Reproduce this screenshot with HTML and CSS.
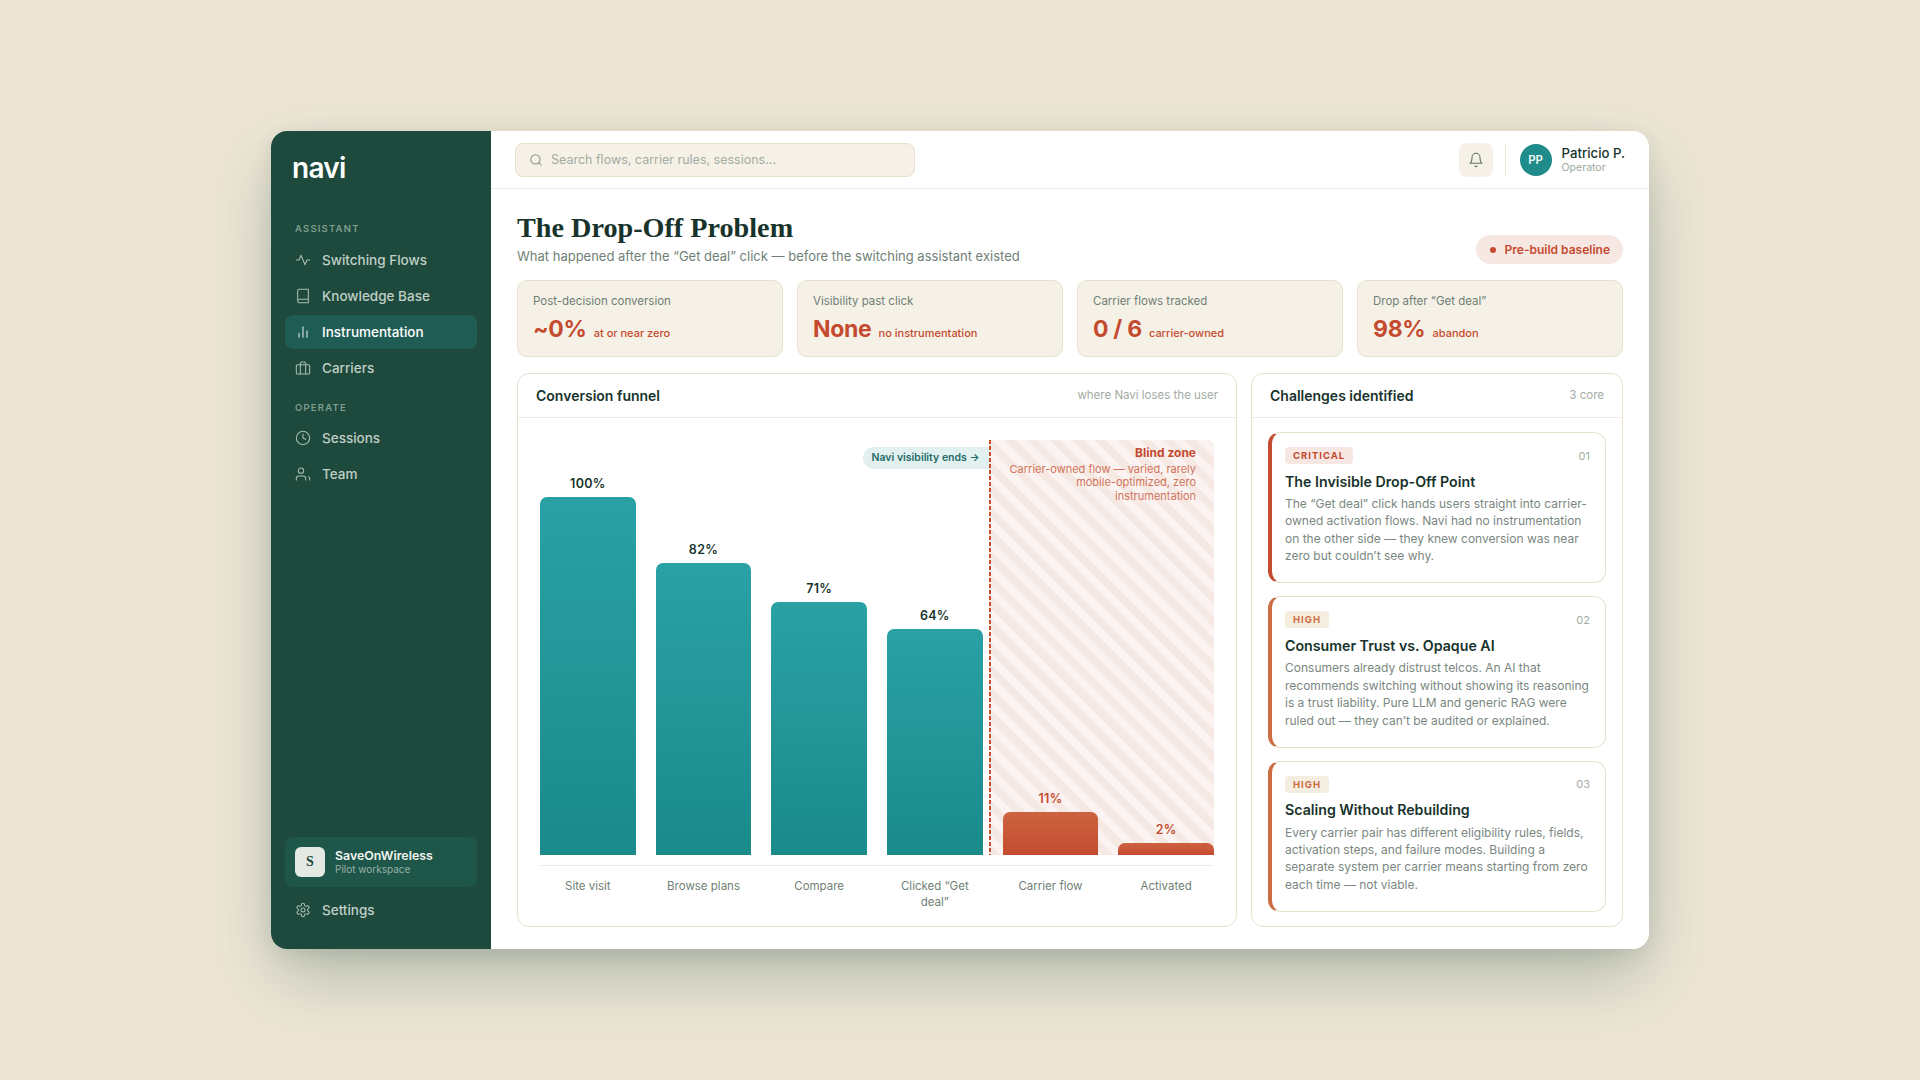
FILE: index.html
```html
<!DOCTYPE html>
<html lang="en">
<head>
    <meta charset="UTF-8">
    <meta name="viewport" content="width=device-width, initial-scale=1.0">
    <title>Navi - The Drop-Off Problem</title>
    <link rel="stylesheet" href="styles.css">
</head>
<body>

    <div class="app">
        <aside class="sidebar">
            <div class="logo">navi</div>

            <div class="nav-label">ASSISTANT</div>
            <nav class="nav">
                <a class="nav-item">
                    <svg class="icon" viewBox="0 0 24 24"><path d="M22 12h-4l-3 7L9 5l-3 7H2"/></svg>
                    Switching Flows
                </a>
                <a class="nav-item">
                    <svg class="icon" viewBox="0 0 24 24"><path d="M4 19.5v-15A2.5 2.5 0 0 1 6.5 2H20v20H6.5a2.5 2.5 0 0 1 0-5H20"/></svg>
                    Knowledge Base
                </a>
                <a class="nav-item active">
                    <svg class="icon" viewBox="0 0 24 24"><path d="M18 20V10M12 20V4M6 20v-6"/></svg>
                    Instrumentation
                </a>
                <a class="nav-item">
                    <svg class="icon" viewBox="0 0 24 24"><rect x="2" y="7" width="20" height="14" rx="2"/><path d="M16 21V5a2 2 0 0 0-2-2h-4a2 2 0 0 0-2 2v16"/></svg>
                    Carriers
                </a>
            </nav>

            <div class="nav-label second">OPERATE</div>
            <nav class="nav">
                <a class="nav-item">
                    <svg class="icon" viewBox="0 0 24 24"><circle cx="12" cy="12" r="10"/><path d="M12 6v6l4 2"/></svg>
                    Sessions
                </a>
                <a class="nav-item">
                    <svg class="icon" viewBox="0 0 24 24"><path d="M16 21v-2a4 4 0 0 0-4-4H6a4 4 0 0 0-4 4v2"/><circle cx="9" cy="7" r="4"/><path d="M22 21v-2a4 4 0 0 0-1.5-3"/></svg>
                    Team
                </a>
            </nav>

            <div class="workspace">
                <div class="workspace-tile">S</div>
                <div>
                    <div class="workspace-name">SaveOnWireless</div>
                    <div class="workspace-sub">Pilot workspace</div>
                </div>
            </div>
            <a class="nav-item settings">
                <svg class="icon" viewBox="0 0 24 24"><path d="M12.22 2h-.44a2 2 0 0 0-2 2v.18a2 2 0 0 1-1 1.73l-.43.25a2 2 0 0 1-2 0l-.15-.08a2 2 0 0 0-2.73.73l-.22.38a2 2 0 0 0 .73 2.73l.15.1a2 2 0 0 1 1 1.72v.51a2 2 0 0 1-1 1.74l-.15.09a2 2 0 0 0-.73 2.73l.22.38a2 2 0 0 0 2.73.73l.15-.08a2 2 0 0 1 2 0l.43.25a2 2 0 0 1 1 1.73V20a2 2 0 0 0 2 2h.44a2 2 0 0 0 2-2v-.18a2 2 0 0 1 1-1.73l.43-.25a2 2 0 0 1 2 0l.15.08a2 2 0 0 0 2.73-.73l.22-.39a2 2 0 0 0-.73-2.73l-.15-.08a2 2 0 0 1-1-1.74v-.5a2 2 0 0 1 1-1.74l.15-.09a2 2 0 0 0 .73-2.73l-.22-.38a2 2 0 0 0-2.73-.73l-.15.08a2 2 0 0 1-2 0l-.43-.25a2 2 0 0 1-1-1.73V4a2 2 0 0 0-2-2z"/><circle cx="12" cy="12" r="3"/></svg>
                Settings
            </a>
        </aside>

        <div class="main">
            <header class="topbar">
                <div class="search">
                    <svg class="search-icon" viewBox="0 0 24 24"><circle cx="11" cy="11" r="8"/><path d="m21 21-4.3-4.3"/></svg>
                    Search flows, carrier rules, sessions...
                </div>
                <div class="bell">
                    <svg class="bell-icon" viewBox="0 0 24 24"><path d="M6 8a6 6 0 0 1 12 0c0 7 3 9 3 9H3s3-2 3-9"/><path d="M10.3 21a1.94 1.94 0 0 0 3.4 0"/></svg>
                </div>
                <div class="divider"></div>
                <div class="avatar">PP</div>
                <div>
                    <div class="user-name">Patricio P.</div>
                    <div class="user-role">Operator</div>
                </div>
            </header>

            <main class="content">
                <div class="page-head">
                    <div>
                        <h1>The Drop-Off Problem</h1>
                        <p class="subtitle">What happened after the “Get deal” click — before the switching assistant existed</p>
                    </div>
                    <div class="baseline"><span class="baseline-dot"></span>Pre-build baseline</div>
                </div>

                <div class="stats">
                    <div class="stat">
                        <div class="stat-label">Post-decision conversion</div>
                        <div class="stat-value">~0% <span>at or near zero</span></div>
                    </div>
                    <div class="stat">
                        <div class="stat-label">Visibility past click</div>
                        <div class="stat-value">None <span>no instrumentation</span></div>
                    </div>
                    <div class="stat">
                        <div class="stat-label">Carrier flows tracked</div>
                        <div class="stat-value">0 / 6 <span>carrier-owned</span></div>
                    </div>
                    <div class="stat">
                        <div class="stat-label">Drop after “Get deal”</div>
                        <div class="stat-value">98% <span>abandon</span></div>
                    </div>
                </div>

                <div class="panels">
                    <section class="panel">
                        <div class="panel-head">
                            <h2>Conversion funnel</h2>
                            <span>where Navi loses the user</span>
                        </div>
                        <div class="funnel">
                            <div class="plot">
                                <div class="blind-zone">
                                    <div class="blind-title">Blind zone</div>
                                    <div class="blind-text">Carrier-owned flow — varied, rarely mobile-optimized, zero instrumentation</div>
                                </div>
                                <div class="visibility">Navi visibility ends →</div>

                                <div class="col"><div class="pct">100%</div><div class="bar" style="height: 358px"></div></div>
                                <div class="col"><div class="pct">82%</div><div class="bar" style="height: 292px"></div></div>
                                <div class="col"><div class="pct">71%</div><div class="bar" style="height: 253px"></div></div>
                                <div class="col"><div class="pct">64%</div><div class="bar" style="height: 226px"></div></div>
                                <div class="col lost"><div class="pct">11%</div><div class="bar" style="height: 43px"></div></div>
                                <div class="col lost"><div class="pct">2%</div><div class="bar" style="height: 12px"></div></div>
                            </div>
                            <div class="axis">
                                <div>Site visit</div>
                                <div>Browse plans</div>
                                <div>Compare</div>
                                <div>Clicked “Get deal”</div>
                                <div>Carrier flow</div>
                                <div>Activated</div>
                            </div>
                        </div>
                    </section>

                    <section class="panel">
                        <div class="panel-head">
                            <h2>Challenges identified</h2>
                            <span>3 core</span>
                        </div>
                        <div class="challenges">
                            <div class="challenge critical">
                                <div class="challenge-top">
                                    <span class="badge">CRITICAL</span>
                                    <span class="num">01</span>
                                </div>
                                <h3>The Invisible Drop-Off Point</h3>
                                <p>The “Get deal” click hands users straight into carrier-owned activation flows. Navi had no instrumentation on the other side — they knew conversion was near zero but couldn’t see why.</p>
                            </div>
                            <div class="challenge">
                                <div class="challenge-top">
                                    <span class="badge">HIGH</span>
                                    <span class="num">02</span>
                                </div>
                                <h3>Consumer Trust vs. Opaque AI</h3>
                                <p>Consumers already distrust telcos. An AI that recommends switching without showing its reasoning is a trust liability. Pure LLM and generic RAG were ruled out — they can’t be audited or explained.</p>
                            </div>
                            <div class="challenge">
                                <div class="challenge-top">
                                    <span class="badge">HIGH</span>
                                    <span class="num">03</span>
                                </div>
                                <h3>Scaling Without Rebuilding</h3>
                                <p>Every carrier pair has different eligibility rules, fields, activation steps, and failure modes. Building a separate system per carrier means starting from zero each time — not viable.</p>
                            </div>
                        </div>
                    </section>
                </div>
            </main>
        </div>
    </div>

</body>
</html>
```

FILE: styles.css
```css
* {
    box-sizing: border-box;
}
body {
    margin: 0;
    height: 100vh;
    display: flex;
    justify-content: center;
    align-items: center;
    background: #ede6d6;
    font-family: Inter, "Liberation Sans", sans-serif;
    color: #17332b;
}
h1, h2, h3, p {
    margin: 0;
}
.app {
    width: 1378px;
    height: 818px;
    display: flex;
    overflow: hidden;
    background: #fff;
    border-radius: 16px;
    box-shadow: 0 30px 70px -6px rgba(29, 74, 60, 0.3), 0 6px 24px -4px rgba(29, 74, 60, 0.14);
}

/* sidebar */
.sidebar {
    width: 220px;
    flex-shrink: 0;
    display: flex;
    flex-direction: column;
    padding: 22px 14px 22px;
    background: #1d4a3c;
}
.logo {
    height: 30px;
    padding-left: 7px;
    font-size: 28px;
    line-height: 30px;
    font-weight: 600;
    letter-spacing: -0.7px;
    color: #fff;
}
.nav-label {
    margin-top: 40px;
    margin-bottom: 7.5px;
    padding-left: 10px;
    font-size: 9.5px;
    line-height: 12px;
    font-weight: 600;
    letter-spacing: 1.2px;
    color: #7f9e92;
}
.nav-label.second {
    margin-top: 16.5px;
    margin-bottom: 7px;
}
.nav {
    display: flex;
    flex-direction: column;
    gap: 2.33px;
}
.nav-item {
    height: 34px;
    display: flex;
    align-items: center;
    gap: 11px;
    padding: 0 10px;
    border-radius: 8px;
    font-size: 13.5px;
    font-weight: 500;
    color: #c0cfc7;
}
.nav-item.active {
    background: #1f5c54;
    color: #fff;
}
.icon {
    width: 16px;
    height: 16px;
    flex-shrink: 0;
    fill: none;
    stroke: currentColor;
    stroke-width: 1.6;
    stroke-linecap: round;
    stroke-linejoin: round;
    opacity: 0.85;
}
.workspace {
    margin-top: auto;
    height: 50px;
    display: flex;
    align-items: center;
    gap: 10px;
    padding: 0 10px;
    border-radius: 8px;
    background: #1f564a;
}
.workspace-tile {
    width: 30px;
    height: 30px;
    display: flex;
    justify-content: center;
    align-items: center;
    border-radius: 6px;
    background: #e4e9e4;
    font-family: "Liberation Serif", serif;
    font-size: 14px;
    font-weight: 700;
    color: #1d4a3c;
}
.workspace-name {
    font-size: 12.4px;
    line-height: 15px;
    font-weight: 600;
    color: #f2f5f1;
}
.workspace-sub {
    font-size: 10px;
    line-height: 13px;
    color: #97b0a6;
}
.settings {
    margin-top: 6px;
}

/* top bar */
.main {
    flex: 1;
    display: flex;
    flex-direction: column;
    min-width: 0;
}
.topbar {
    height: 58px;
    flex-shrink: 0;
    display: flex;
    align-items: center;
    padding: 0 24px 0 24px;
    border-bottom: 1px solid #f2ebdf;
}
.search {
    width: 400px;
    height: 34px;
    display: flex;
    align-items: center;
    gap: 8px;
    padding-left: 13px;
    margin-right: auto;
    background: #f6f1e7;
    border: 1px solid #e8e0cf;
    border-radius: 8px;
    font-size: 12.5px;
    color: #a3aca3;
}
.search-icon {
    width: 14px;
    height: 14px;
    fill: none;
    stroke: #84948b;
    stroke-width: 1.8;
    stroke-linecap: round;
}
.bell {
    width: 34px;
    height: 34px;
    display: flex;
    justify-content: center;
    align-items: center;
    border-radius: 8px;
    background: #f6f1e7;
}
.bell-icon {
    width: 16px;
    height: 16px;
    fill: none;
    stroke: #5f7168;
    stroke-width: 1.6;
    stroke-linecap: round;
    stroke-linejoin: round;
}
.divider {
    width: 1px;
    height: 32px;
    margin: 0 14px 0 12px;
    background: #efe9dc;
}
.avatar {
    width: 32px;
    height: 32px;
    display: flex;
    justify-content: center;
    align-items: center;
    margin-right: 10px;
    border-radius: 50%;
    background: #1f8b8a;
    font-size: 11.5px;
    font-weight: 600;
    color: #eef8f6;
}
.user-name {
    font-size: 13.2px;
    line-height: 16px;
    font-weight: 500;
    color: #17332b;
}
.user-role {
    font-size: 10.5px;
    line-height: 14px;
    color: #9ea89f;
}

/* content */
.content {
    flex: 1;
    display: flex;
    flex-direction: column;
    min-height: 0;
    padding: 23px 26px 22px;
}
.page-head {
    display: flex;
    justify-content: space-between;
    align-items: flex-end;
    margin-bottom: 15px;
}
h1 {
    font-family: "Liberation Serif", serif;
    font-size: 28.2px;
    line-height: 32px;
    font-weight: 700;
    color: #17332b;
}
.subtitle {
    margin-top: 3px;
    font-size: 13px;
    line-height: 18px;
    color: #6f7f76;
}
.baseline {
    height: 29px;
    display: flex;
    align-items: center;
    gap: 9px;
    margin-bottom: 1px;
    padding: 0 13px 0 14px;
    border-radius: 15px;
    background: #f7e7e2;
    font-size: 12px;
    font-weight: 600;
    color: #c44b2f;
}
.baseline-dot {
    width: 6px;
    height: 6px;
    border-radius: 50%;
    background: #c44b2f;
}
.stats {
    display: grid;
    grid-template-columns: repeat(4, 1fr);
    gap: 14px;
    margin-bottom: 16px;
}
.stat {
    height: 77px;
    padding: 12px 15px;
    background: #f6f1e7;
    border: 1px solid #e8e0cf;
    border-radius: 10px;
}
.stat-label {
    font-size: 11.5px;
    line-height: 16px;
    color: #6f7f76;
}
.stat-value {
    margin-top: 5px;
    font-size: 23px;
    line-height: 30px;
    font-weight: 700;
    letter-spacing: -0.3px;
    color: #c44b2f;
    white-space: nowrap;
}
.stat-value span {
    margin-left: 2px;
    font-size: 11px;
    font-weight: 500;
    letter-spacing: 0;
}
.panels {
    flex: 1;
    min-height: 0;
    display: grid;
    grid-template-columns: 1fr 372px;
    gap: 14px;
}
.panel {
    display: flex;
    flex-direction: column;
    min-height: 0;
    border: 1px solid #e8e0cf;
    border-radius: 12px;
}
.panel-head {
    height: 44px;
    flex-shrink: 0;
    display: flex;
    justify-content: space-between;
    align-items: center;
    padding: 0 18px 1px;
    border-bottom: 1px solid #f2ebdf;
}
.panel-head h2 {
    font-size: 14px;
    font-weight: 600;
}
.panel-head span {
    font-size: 11.5px;
    color: #a3aca3;
}

/* funnel chart */
.funnel {
    flex: 1;
    padding: 22px 22px 0;
}
.plot {
    position: relative;
    height: 415px;
    display: grid;
    grid-template-columns: repeat(6, 1fr);
    gap: 20px;
}
.col {
    position: relative;
    display: flex;
    flex-direction: column;
    justify-content: flex-end;
}
.pct {
    margin-bottom: 5px;
    font-size: 12.5px;
    line-height: 16px;
    font-weight: 600;
    letter-spacing: 0.3px;
    text-align: center;
    color: #17332b;
}
.bar {
    border-radius: 7px 7px 0 0;
    background: linear-gradient(180deg, #2aa1a5, #1a8a8a);
}
.lost .pct {
    color: #c44b2f;
}
.lost .bar {
    background: linear-gradient(180deg, #cc6340, #c44b2f);
}
.blind-zone {
    position: absolute;
    top: 0;
    bottom: 0;
    right: 0;
    width: 225.5px;
    padding: 5px 18px 0 16px;
    text-align: right;
    border-top-right-radius: 7px;
    background: repeating-linear-gradient(45deg, #f6e9e3 0, #f6e9e3 8px, #faf3f1 8px, #faf3f1 16px);
}
.blind-zone::before {
    content: "";
    position: absolute;
    top: 0;
    bottom: 0;
    left: 0;
    width: 2px;
    background: repeating-linear-gradient(180deg, #c44b2f 0, #c44b2f 4px, transparent 4px, transparent 6px);
}
.blind-title {
    font-size: 12px;
    line-height: 15px;
    font-weight: 700;
    color: #c44b2f;
}
.blind-text {
    margin-top: 2.5px;
    font-size: 11px;
    line-height: 13.5px;
    color: #d2735c;
}
.visibility {
    position: absolute;
    top: 7px;
    right: 225.5px;
    height: 22px;
    padding: 0 9px;
    border-radius: 11px 0 0 11px;
    background: #e2f0f0;
    font-size: 10.5px;
    line-height: 22px;
    font-weight: 600;
    color: #1f6b68;
}
.axis {
    display: grid;
    grid-template-columns: repeat(6, 1fr);
    gap: 20px;
    margin-top: 10px;
    padding-top: 13px;
    border-top: 1px solid #f2ebdf;
    font-size: 11.5px;
    line-height: 15.5px;
    text-align: center;
    color: #6f7f76;
}

/* challenges */
.challenges {
    flex: 1;
    min-height: 0;
    display: flex;
    flex-direction: column;
    gap: 13px;
    padding: 14px 16px 14px;
}
.challenge {
    flex: 1;
    padding: 14px 15px 0 13px;
    border: 1px solid #e8e0cf;
    border-left: 4px solid #cc6c42;
    border-radius: 12px;
}
.challenge.critical {
    border-left-color: #c44b2f;
}
.challenge-top {
    display: flex;
    justify-content: space-between;
    align-items: center;
}
.badge {
    height: 17px;
    padding: 0 8px;
    border-radius: 4px;
    background: #f5ede0;
    font-size: 9.5px;
    line-height: 17px;
    font-weight: 700;
    letter-spacing: 1px;
    color: #cc6c42;
}
.critical .badge {
    background: #f7e7e2;
    color: #c44b2f;
}
.num {
    font-size: 11px;
    color: #a3aca3;
}
.challenge h3 {
    margin-top: 8.5px;
    font-size: 14.2px;
    line-height: 18px;
    font-weight: 600;
}
.challenge p {
    margin-top: 4.5px;
    font-size: 12px;
    line-height: 17.4px;
    color: #7a877f;
}
```
